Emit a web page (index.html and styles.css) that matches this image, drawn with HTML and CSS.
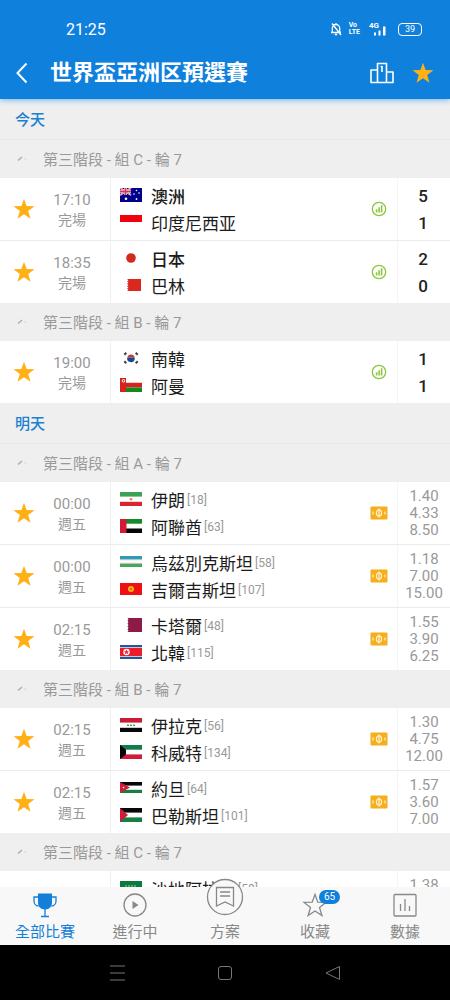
FILE: index.html
```html
<!DOCTYPE html>
<html lang="zh-Hant">
<head>
<meta charset="utf-8">
<meta name="viewport" content="width=device-width, initial-scale=1">
<title>世界盃亞洲区預選賽</title>
<link rel="stylesheet" href="styles.css">
</head>
<body>
<svg class="defs" aria-hidden="true">
  <symbol id="star" viewBox="0 0 22 22"><path fill="currentColor" d="M11 .8l2.6 7.2 7.9.2-6.3 4.8 2.3 7.8-6.5-4.5-6.5 4.5L6.800 13 .5 8.200l7.900-.2z"/></symbol>
  <symbol id="stats" viewBox="0 0 16 16"><circle cx="8" cy="8" r="6.700" fill="none" stroke="#8cc63f" stroke-width="1.300"/><path fill="#8cc63f" d="M4.800 8.300h1.600v3.200H4.800zM7.300 6.300h1.600v5.200H7.300zM9.800 4.300h1.600v7.200H9.800z"/></symbol>
  <symbol id="cash" viewBox="0 0 18 14"><rect x=".5" y=".5" width="17" height="13" rx="1" fill="#f6ae1c"/><ellipse cx="9" cy="7" rx="2.600" ry="3.200" fill="none" stroke="#fff3cf" stroke-width="1.200"/><path d="M9 2.500v9M3 5.500v3M15 5.500v3" stroke="#fff3cf" stroke-width="1.200"/></symbol>
  <symbol id="arc" viewBox="0 0 12 8"><path d="M2 6.500l4-3.500" stroke="#a9a9a9" stroke-width="1.300" fill="none"/><path d="M8.500 4.500l2 1.500" stroke="#d2d2d2" fill="none"/></symbol>
  <symbol id="au" viewBox="0 0 22 14"><path fill="#00008b" d="M0 0h22v14H0z"/><path d="M0 0l11 7M11 0L0 7" stroke="#fff" stroke-width="1.800"/><path d="M5.500 0v7M0 3.500h11" stroke="#fff" stroke-width="2.400"/><path d="M0 0l11 7M11 0L0 7" stroke="#e4405a" stroke-width=".7"/><path d="M5.500 0v7M0 3.500h11" stroke="#e4304c" stroke-width="1.300"/><g fill="#fff"><circle cx="6" cy="10.700" r="1.300"/><circle cx="16.500" cy="2.500" r=".8"/><circle cx="14" cy="6" r=".8"/><circle cx="19" cy="5" r=".8"/><circle cx="16.500" cy="11" r=".9"/></g></symbol>
  <symbol id="id" viewBox="0 0 22 14"><path fill="#fff" d="M0 0h22v14H0z"/><path fill="#f4000c" d="M0 0h22v7H0z"/></symbol>
  <symbol id="jp" viewBox="0 0 22 14"><path fill="#fff" d="M0 0h22v14H0z"/><circle cx="11" cy="7" r="4.800" fill="#d32a1e"/></symbol>
  <symbol id="bh" viewBox="0 0 22 14"><path fill="#fff" d="M0 0h22v14H0z"/><path fill="#da291c" d="M21 1H7l1.500 1.200L7 3.400l1.500 1.200L7 5.800 8.500 7 7 8.200l1.500 1.200L7 10.600l1.500 1.200L7 13h14z"/></symbol>
  <symbol id="kr" viewBox="0 0 22 14"><path fill="#fff" d="M0 0h22v14H0z"/><path d="M7.300 6.500a3.800 3.800 0 0 1 7.400 0z" fill="#d53342"/><path d="M7.300 6.500a3.800 3.800 0 0 0 7.400 1.800V6.500z" fill="#174b8c"/><g stroke="#444" stroke-width="2"><path d="M4.300 3.700l2-2M15.700 1.700l2 2M4.300 10.300l2 2M15.700 12.300l2-2"/></g></symbol>
  <symbol id="om" viewBox="0 0 22 14"><path fill="#fff" d="M0 0h22v14H0z"/><path fill="#d7231f" d="M0 0h6v14H0zM6 4.700h16v4.800H6z"/><path fill="#128a1b" d="M6 9.500h16V14H6z"/><circle cx="3.500" cy="2.800" r="1.300" fill="none" stroke="#fff"/></symbol>
  <symbol id="ir" viewBox="0 0 22 14"><path fill="#fff" d="M0 0h22v14H0z"/><path fill="#3ca255" d="M0 0h22v4.600H0z"/><path fill="#d9252f" d="M0 9.800h22V14H0z"/><circle cx="11" cy="7.200" r="1.300" fill="#e77a72"/></symbol>
  <symbol id="ae" viewBox="0 0 22 14"><path fill="#fff" d="M0 0h22v14H0z"/><path fill="#168a27" d="M6 0h16v4.700H6z"/><path fill="#050505" d="M6 9.500h16V14H6z"/><path fill="#d21b37" d="M0 0h6.500v14H0z"/></symbol>
  <symbol id="uz" viewBox="0 0 22 14"><path fill="#fff" d="M0 0h22v14H0z"/><path fill="#2e9cb5" d="M0 1h22v3.500H0z"/><path fill="#40a95b" d="M0 8.500h22V12H0z"/><path stroke="#e7b3b3" stroke-width=".5" d="M0 4.900h22M0 8.200h22"/></symbol>
  <symbol id="kg" viewBox="0 0 22 14"><path fill="#ee1111" d="M0 1h22v12H0z"/><circle cx="11" cy="7" r="3" fill="#ffb21c"/><circle cx="11" cy="7" r="1.300" fill="#ee6a11"/></symbol>
  <symbol id="qa" viewBox="0 0 22 14"><path fill="#fff" d="M0 0h22v14H0z"/><path fill="#8d1b46" d="M22 0H7.500l1 1.400-1 1.400 1 1.400-1 1.400 1 1.400-1 1.400 1 1.400-1 1.400 1 1.400-1 1.400H22z"/></symbol>
  <symbol id="kp" viewBox="0 0 22 14"><path fill="#2b5199" d="M0 0h22v14H0z"/><path fill="#fff" d="M0 2.300h22v9.400H0z"/><path fill="#ec1d2b" d="M0 3h22v8H0z"/><circle cx="6.500" cy="7" r="3.200" fill="#fff"/><path fill="#ec1d2b" d="M6.500 4.400l.7 1.800h1.900L7.600 7.400l.6 1.900-1.700-1.100-1.700 1.100.6-1.900-1.500-1.200h1.900z"/></symbol>
  <symbol id="iq" viewBox="0 0 22 14"><path fill="#fff" d="M0 0h22v14H0z"/><path fill="#ce1b35" d="M0 0h22v4.600H0z"/><path fill="#080808" d="M0 9.800h22V14H0z"/><path stroke="#4a9b59" stroke-width="1.600" stroke-dasharray="2 1" d="M7 7.200h9"/></symbol>
  <symbol id="kw" viewBox="0 0 22 14"><path fill="#fff" d="M0 0h22v14H0z"/><path fill="#127c4a" d="M0 0h22v4.700H0z"/><path fill="#d01c38" d="M0 9.400h22V14H0z"/><path fill="#080808" d="M0 0l6 4.700v4.700L0 14z"/></symbol>
  <symbol id="jo" viewBox="0 0 22 14"><path fill="#fff" d="M0 0h22v14H0z"/><path fill="#080808" d="M0 1h22v3.600H0z"/><path fill="#148044" d="M0 8.800h22V12H0z"/><path fill="#d01c38" d="M0 1l10 5.500L0 12z"/><circle cx="3.500" cy="6.500" r=".8" fill="#fff"/></symbol>
  <symbol id="ps" viewBox="0 0 22 14"><path fill="#fff" d="M0 0h22v14H0z"/><path fill="#080808" d="M0 0h22v4.600H0z"/><path fill="#148044" d="M0 9.400h22V14H0z"/><path fill="#d01c38" d="M0 0l8 7-8 7z"/></symbol>
  <symbol id="sa" viewBox="0 0 22 14"><path fill="#0b7a3d" d="M0 0h22v14H0z"/><path stroke="#a5d0b6" stroke-dasharray="2 1" d="M5 5h12M6 9h10"/></symbol>
</svg>

<div class="app">
  <header class="top">
    <div class="status">
      <time>21:25</time>
      <div class="status-icons">
        <svg width="12" height="14" viewBox="0 0 12 14" fill="none" stroke="#fff" stroke-width="1.300"><path d="M1 10.500h10M2.300 10V6.200a3.700 3.700 0 0 1 7.400 0V10M6 2.500V1M4.800 12.500h2.400M2 1.500l9 11.500"/></svg>
        <span class="volte">Vo<br>LTE</span>
        <div class="signal"><span>4G</span><svg width="16" height="14" viewBox="0 0 16 14" fill="#fff"><path d="M2 10.500h2v3H2zM6.500 8.500h2v5h-2zM11 4.500h2.500v9H11z"/></svg></div>
        <div class="battery">39</div>
      </div>
    </div>
    <div class="bar">
      <button class="icon-btn" aria-label="返回"><svg width="12" height="22" viewBox="0 0 12 22" fill="none" stroke="#fff" stroke-width="2"><path d="M10.500 1.500L1.500 11l9 9.500"/></svg></button>
      <h1>世界盃亞洲区預選賽</h1>
      <button class="icon-btn" aria-label="排名"><svg width="24" height="22" viewBox="0 0 24 22" fill="none" stroke="#fff" stroke-width="1.600" stroke-linejoin="round"><path d="M7.500 20.500V1.500h9v19M7.500 8H1v12.500h22V10h-6.500M12 4v6M10.800 5.200L12 4"/></svg></button>
      <button class="icon-btn fav" aria-label="收藏"><svg width="22" height="22"><use href="#star"/></svg></button>
    </div>
  </header>

  <main class="list">
    <h2 class="day">今天</h2>
    <section>
      <h3 class="league"><svg width="12" height="8"><use href="#arc"/></svg>第三階段 - 組 C - 輪 7</h3>
      <article class="match">
        <button class="fav" aria-label="收藏"><svg width="22" height="22"><use href="#star"/></svg></button>
        <div class="when"><time>17:10</time><span>完場</span></div>
        <div class="teams"><p class="win"><svg class="flag"><use href="#au"/></svg>澳洲</p><p><svg class="flag"><use href="#id"/></svg>印度尼西亚</p></div>
        <svg class="mark" width="18" height="16"><use href="#stats"/></svg>
        <div class="score"><span>5</span><span>1</span></div>
      </article>
      <article class="match">
        <button class="fav" aria-label="收藏"><svg width="22" height="22"><use href="#star"/></svg></button>
        <div class="when"><time>18:35</time><span>完場</span></div>
        <div class="teams"><p class="win"><svg class="flag"><use href="#jp"/></svg>日本</p><p><svg class="flag"><use href="#bh"/></svg>巴林</p></div>
        <svg class="mark" width="18" height="16"><use href="#stats"/></svg>
        <div class="score"><span>2</span><span>0</span></div>
      </article>
    </section>
    <section>
      <h3 class="league"><svg width="12" height="8"><use href="#arc"/></svg>第三階段 - 組 B - 輪 7</h3>
      <article class="match">
        <button class="fav" aria-label="收藏"><svg width="22" height="22"><use href="#star"/></svg></button>
        <div class="when"><time>19:00</time><span>完場</span></div>
        <div class="teams"><p><svg class="flag"><use href="#kr"/></svg>南韓</p><p><svg class="flag"><use href="#om"/></svg>阿曼</p></div>
        <svg class="mark" width="18" height="16"><use href="#stats"/></svg>
        <div class="score"><span>1</span><span>1</span></div>
      </article>
    </section>

    <h2 class="day">明天</h2>
    <section>
      <h3 class="league"><svg width="12" height="8"><use href="#arc"/></svg>第三階段 - 組 A - 輪 7</h3>
      <article class="match">
        <button class="fav" aria-label="收藏"><svg width="22" height="22"><use href="#star"/></svg></button>
        <div class="when"><time>00:00</time><span>週五</span></div>
        <div class="teams"><p><svg class="flag"><use href="#ir"/></svg>伊朗<small>[18]</small></p><p><svg class="flag"><use href="#ae"/></svg>阿聯酋<small>[63]</small></p></div>
        <svg class="mark" width="18" height="14"><use href="#cash"/></svg>
        <div class="odds"><span>1.40</span><span>4.33</span><span>8.50</span></div>
      </article>
      <article class="match">
        <button class="fav" aria-label="收藏"><svg width="22" height="22"><use href="#star"/></svg></button>
        <div class="when"><time>00:00</time><span>週五</span></div>
        <div class="teams"><p><svg class="flag"><use href="#uz"/></svg>烏茲別克斯坦<small>[58]</small></p><p><svg class="flag"><use href="#kg"/></svg>吉爾吉斯坦<small>[107]</small></p></div>
        <svg class="mark" width="18" height="14"><use href="#cash"/></svg>
        <div class="odds"><span>1.18</span><span>7.00</span><span>15.00</span></div>
      </article>
      <article class="match">
        <button class="fav" aria-label="收藏"><svg width="22" height="22"><use href="#star"/></svg></button>
        <div class="when"><time>02:15</time><span>週五</span></div>
        <div class="teams"><p><svg class="flag"><use href="#qa"/></svg>卡塔爾<small>[48]</small></p><p><svg class="flag"><use href="#kp"/></svg>北韓<small>[115]</small></p></div>
        <svg class="mark" width="18" height="14"><use href="#cash"/></svg>
        <div class="odds"><span>1.55</span><span>3.90</span><span>6.25</span></div>
      </article>
    </section>
    <section>
      <h3 class="league"><svg width="12" height="8"><use href="#arc"/></svg>第三階段 - 組 B - 輪 7</h3>
      <article class="match">
        <button class="fav" aria-label="收藏"><svg width="22" height="22"><use href="#star"/></svg></button>
        <div class="when"><time>02:15</time><span>週五</span></div>
        <div class="teams"><p><svg class="flag"><use href="#iq"/></svg>伊拉克<small>[56]</small></p><p><svg class="flag"><use href="#kw"/></svg>科威特<small>[134]</small></p></div>
        <svg class="mark" width="18" height="14"><use href="#cash"/></svg>
        <div class="odds"><span>1.30</span><span>4.75</span><span>12.00</span></div>
      </article>
      <article class="match">
        <button class="fav" aria-label="收藏"><svg width="22" height="22"><use href="#star"/></svg></button>
        <div class="when"><time>02:15</time><span>週五</span></div>
        <div class="teams"><p><svg class="flag"><use href="#jo"/></svg>約旦<small>[64]</small></p><p><svg class="flag"><use href="#ps"/></svg>巴勒斯坦<small>[101]</small></p></div>
        <svg class="mark" width="18" height="14"><use href="#cash"/></svg>
        <div class="odds"><span>1.57</span><span>3.60</span><span>7.00</span></div>
      </article>
    </section>
    <section>
      <h3 class="league"><svg width="12" height="8"><use href="#arc"/></svg>第三階段 - 組 C - 輪 7</h3>
      <article class="match">
        <span></span>
        <div class="when"></div>
        <div class="teams"><p><svg class="flag"><use href="#sa"/></svg>沙地阿拉伯<small>[58]</small></p></div>
        <span></span>
        <div class="odds"><span>1.38</span></div>
      </article>
    </section>
  </main>

  <nav class="tabs">
    <a href="#" class="tab active"><svg width="26" height="26" viewBox="0 0 26 26"><path fill="currentColor" d="M6 1.500h14v9c0 4-2.500 7-7 7s-7-3-7-7z"/><path d="M6 5H2v4c0 3 2 5 4.500 5M20 5h4v4c0 3-2 5-4.500 5M13 17v7M9 24.500h8" fill="none" stroke="currentColor" stroke-width="1.300"/></svg>全部比賽</a>
    <a href="#" class="tab"><svg width="26" height="26" viewBox="0 0 26 26"><circle cx="13" cy="13" r="11" fill="none" stroke="currentColor" stroke-width="1.300"/><path fill="currentColor" d="M10.500 9l6 4-6 4z"/></svg>進行中</a>
    <a href="#" class="tab raised"><svg width="38" height="38" viewBox="0 0 38 38" fill="none" stroke="currentColor" stroke-width="1.300"><circle cx="19" cy="19" r="17.500" fill="#f8f8f8"/><path d="M10.500 9.500h17v18.500L19 24l-8.500 4zM14 14h10M14 18h10"/></svg>方案</a>
    <a href="#" class="tab"><svg width="26" height="26" viewBox="0 0 26 26" fill="none" stroke="currentColor" stroke-width="1.300"><path d="M13 2.500l2.800 7.700 8.200.2-6.500 5.100 2.400 8L13 19l-6.900 4.500 2.400-8L2 10.400l8.200-.2z"/></svg>收藏<span class="badge">65</span></a>
    <a href="#" class="tab"><svg width="26" height="26" viewBox="0 0 26 26" fill="none" stroke="currentColor" stroke-width="1.300"><rect x="2" y="2.500" width="22" height="21.500" rx="1"/><path d="M8.500 12v7M13 7v12M17.500 14v5"/></svg>數據</a>
  </nav>

  <footer class="system">
    <button aria-label="選單"><svg width="18" height="18" viewBox="0 0 18 18" stroke="#777" fill="none"><path d="M2 2h15M2 9h15M2 16h15"/></svg></button>
    <button aria-label="主頁"><svg width="18" height="18" viewBox="0 0 18 18" stroke="#777" fill="none"><rect x="2.500" y="2.500" width="13" height="13" rx="2.500"/></svg></button>
    <button aria-label="返回"><svg width="18" height="18" viewBox="0 0 18 18" stroke="#777" fill="none" stroke-linejoin="round"><path d="M15.500 2.500v13L2 9z"/></svg></button>
  </footer>
</div>
</body>
</html>
```
FILE: styles.css
```css
* { box-sizing: border-box; }
body, h1, h2, h3, p { margin: 0; }
body {
  font-family: Roboto, "Noto Sans CJK TC", sans-serif;
  background: #efefef;
}
button { border: 0; padding: 0; background: none; display: grid; place-items: center; }
svg { display: block; flex: none; }
.defs { position: absolute; width: 0; height: 0; }
.app { height: 100vh; display: flex; flex-direction: column; }

.top {
  flex: none;
  background: #0f80dc;
  color: #fff;
  padding: 20px 16px 0;
  box-shadow: 0 1px 6px #6fb3ec;
  z-index: 1;
}
.status { display: flex; justify-content: space-between; align-items: center; height: 18px; padding: 0 12px 0 50px; font-size: 16px; }
.status-icons { display: flex; align-items: center; gap: 7px; }
.volte { font-size: 7px; line-height: 7px; font-weight: 700; }
.signal { display: flex; position: relative; padding-left: 3px; margin-right: 3px; margin-left: 2px; }
.signal span { position: absolute; left: 0; top: 0; font-size: 8px; line-height: 7px; font-weight: 700; }
.battery { border: 1px solid #fff; border-radius: 4px; width: 24px; height: 13px; font-size: 9px; line-height: 11px; text-align: center; }
.bar { display: flex; align-items: center; height: 52px; gap: 18px; margin-top: 9px; }
.bar h1 { flex: 1; font-size: 22px; font-weight: 700; line-height: 32px; white-space: nowrap; padding-left: 4px; }
.fav { color: #ffb015; }

.list { flex: 1; min-height: 0; overflow: hidden; }
.day { height: 41px; padding: 0 15px; font-size: 15px; line-height: 42px; font-weight: 500; color: #1b80d0; border-bottom: 1px solid #e9e9e9; }
.league { height: 38px; padding: 0 16px 2px; display: flex; align-items: center; gap: 15px; font-size: 15px; font-weight: 400; color: #999; }

.match { display: grid; grid-template-columns: 48px 63px 1fr 34px 53px; align-items: center; height: 62px; background: #fff; }
.match + .match { height: 63px; border-top: 1px solid #ebebeb; }
.when { height: 100%; display: flex; flex-direction: column; justify-content: center; align-items: center; padding: 2px 14px 0 0; border-right: 1px solid #f0f0f0; font-size: 15px; line-height: 20px; color: #999; }
.when span { font-size: 14px; }
.teams { height: 100%; padding: 4px 0 0 9px; }
.teams p { display: flex; align-items: center; height: 27px; font-size: 17px; color: #1c1c1c; white-space: nowrap; }
.teams .win { font-weight: 500; }
.teams small { font-size: 12px; color: #999; margin-left: 2px; }
.flag { width: 22px; height: 14px; margin-right: 9px; margin-bottom: 1px; }
.mark { margin-left: 7px; }
.score, .odds { height: 100%; display: flex; flex-direction: column; align-items: center; border-left: 1px solid #f5f5f5; padding-top: 5px; }
.score { font-size: 17px; font-weight: 500; line-height: 27px; color: #222; padding-right: 2px; }
.odds { font-size: 15px; line-height: 17px; color: #999; padding-top: 6px; }

.tabs { flex: none; display: grid; grid-template-columns: repeat(5, 1fr); height: 58px; background: #f8f8f8; }
.tab { position: relative; display: flex; flex-direction: column; align-items: center; padding-top: 5px; font-size: 15px; line-height: 28px; color: #888; text-decoration: none; }
.tab.active { color: #147fd8; }
.raised svg { margin-top: -14px; margin-bottom: 2px; }
.badge { position: absolute; top: 3px; left: 50%; margin-left: 4px; width: 21px; height: 14px; border-radius: 7px; background: #0f80dc; color: #fff; font-size: 10px; line-height: 14px; text-align: center; }

.system { flex: none; height: 55px; background: #000; display: flex; justify-content: center; align-items: center; gap: 90px; }
```
